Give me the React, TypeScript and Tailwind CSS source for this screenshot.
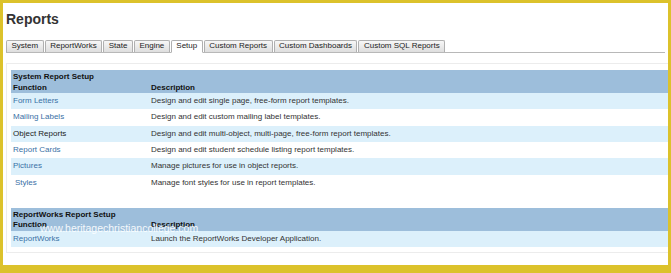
import React from 'react';

type Row = { name: string; desc: string; dark?: boolean; indent?: boolean };

const tabs = [
  'System',
  'ReportWorks',
  'State',
  'Engine',
  'Setup',
  'Custom Reports',
  'Custom Dashboards',
  'Custom SQL Reports',
];

const systemRows: Row[] = [
  { name: 'Form Letters', desc: 'Design and edit single page, free-form report templates.' },
  { name: 'Mailing Labels', desc: 'Design and edit custom mailing label templates.' },
  { name: 'Object Reports', desc: 'Design and edit multi-object, multi-page, free-form report templates.', dark: true },
  { name: 'Report Cards', desc: 'Design and edit student schedule listing report templates.' },
  { name: 'Pictures', desc: 'Manage pictures for use in object reports.' },
  { name: 'Styles', desc: 'Manage font styles for use in report templates.', indent: true },
];

const reportWorksRows: Row[] = [
  { name: 'ReportWorks', desc: 'Launch the ReportWorks Developer Application.' },
];

const SetupTable: React.FC<{ title: string; rows: Row[] }> = ({ title, rows }) => (
  <div className="w-full text-[8px]">
    <div className="bg-[#9dbedb] text-[#111] font-bold">
      <div className="h-[11px] leading-[11px] pt-[1px] px-[2px]">{title}</div>
      <div className="h-[12px] flex items-center pt-[1px]">
        <div className="w-[138px] px-[2px]">Function</div>
        <div className="px-[2px]">Description</div>
      </div>
    </div>
    {rows.map((r, i) => (
      <div
        key={r.name}
        className={`h-[16.33px] flex items-center ${i % 2 === 0 ? 'bg-[#dcf0fb]' : 'bg-white'}`}
      >
        <div
          className={`w-[138px] px-[2px] ${r.dark ? 'text-[#222]' : 'text-[#3a70a6]'} ${r.indent ? 'pl-[4px]' : ''}`}
        >
          {r.name}
        </div>
        <div className="px-[2px] text-[#333]">{r.desc}</div>
      </div>
    ))}
  </div>
);

const App: React.FC = () => {
  return (
    <div className="relative w-[671px] h-[273px] overflow-hidden bg-white border-[#dcc22b] border-t-[3px] border-l-[3px] border-r-[3px] border-b-[8px] font-['Liberation_Sans',Arial,sans-serif]">
      <div className="pl-[3px] pt-[8px]">
        <h1 className="text-[14px] leading-[16px] font-bold text-[#333]">Reports</h1>
      </div>

      <div className="mt-[13px] ml-[3px] mr-[3px] flex items-end gap-[1px] border-b border-[#b8b8b8] h-[13px]">
        {tabs.map(t => (
          <div
            key={t}
            className={`h-[12px] px-[4.5px] text-[8px] leading-[10px] text-[#222] border border-[#b0b0b0] rounded-t-[2px] ${
              t === 'Setup'
                ? 'bg-white border-b-white -mb-px h-[13px]'
                : 'bg-gradient-to-b from-[#f7f7f7] to-[#dedede] border-b-0'
            }`}
          >
            {t}
          </div>
        ))}
      </div>

      <div className="mt-[10px] ml-[3px] border border-r-0 border-[#ececec] pt-[6px] pl-[4px] pb-[5px]">
        <SetupTable title="System Report Setup" rows={systemRows} />
        <div className="h-[17px]" />
        <SetupTable title="ReportWorks Report Setup" rows={reportWorksRows} />
      </div>

      <div className="absolute left-[37px] top-[218px] text-[10.5px] text-white/90 pointer-events-none">
        www.heritagechristiancollege.com
      </div>
    </div>
  );
};

export default App;
